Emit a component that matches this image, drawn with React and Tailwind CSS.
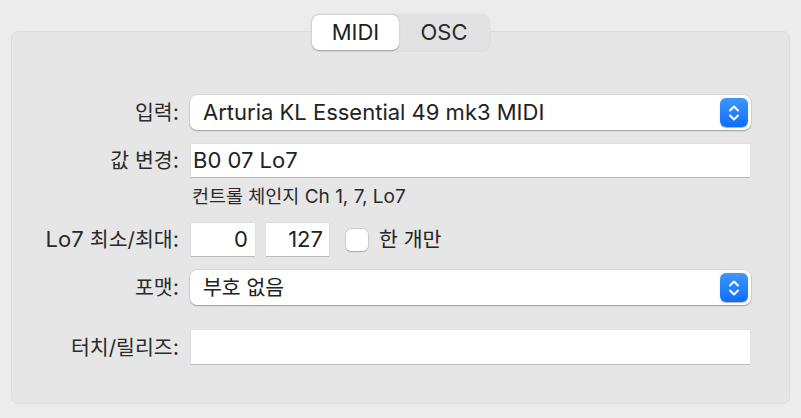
import React from 'react';

const font = { fontFamily: 'Inter, "Noto Sans CJK KR", sans-serif' };

// Hangul runs sized apart from the Latin text
const K = ({ children, className = 'text-[20.5px]' }) => <span className={className}>{children}</span>;

const Stepper = () => (
  <div className="w-[28px] h-[29px] rounded-[6px] bg-gradient-to-b from-[#3d97ff] to-[#0b6dfe] flex items-center justify-center shadow-[0_0.5px_1px_rgba(0,0,0,0.3)]">
    <svg width="14" height="20" viewBox="0 0 14 20" fill="none" stroke="white" strokeWidth="2" strokeLinecap="round" strokeLinejoin="round">
      <path d="M3 7.5 L7 3.5 L11 7.5" />
      <path d="M3 12.5 L7 16.5 L11 12.5" />
    </svg>
  </div>
);

const Popup = ({ children }) => (
  <div className="flex-1 h-[35px] bg-white rounded-[7px] flex items-center justify-between pl-[13px] pr-[3px] shadow-[0_0_0_0.5px_rgba(0,0,0,0.12),0_1px_1.5px_rgba(0,0,0,0.28)]">
    <span className="text-[22px] text-[#222] whitespace-nowrap">{children}</span>
    <Stepper />
  </div>
);

const Field = ({ children, className = '' }) => (
  <div className={`h-[33px] bg-white flex items-center text-[22px] text-[#222] whitespace-nowrap shadow-[0_0_0_0.5px_rgba(0,0,0,0.06),0_1px_0_rgba(0,0,0,0.16)] ${className}`}>
    {children}
  </div>
);

const Label = ({ children }) => (
  <div className="w-[158px] shrink-0 text-right text-[22px] text-[#2a2a2a] pr-[1px] whitespace-nowrap">{children}</div>
);

export default function App() {
  return (
    <div className="w-[801px] h-[418px] bg-[#ececec] pt-[14px] px-[11px]" style={font}>
      <div className="relative z-10 flex justify-center">
        <div className="flex h-[37px] rounded-[8px] bg-[#e2e2e2] shadow-[0_0_0_0.5px_rgba(0,0,0,0.06)] p-[1px]">
          <div className="w-[87px] rounded-[7px] bg-white flex items-center justify-center text-[22px] text-[#1f1f1f] shadow-[0_0.5px_1.5px_rgba(0,0,0,0.3)]">
            MIDI
          </div>
          <div className="w-[90px] flex items-center justify-center text-[22px] text-[#2a2a2a]">OSC</div>
        </div>
      </div>
      <div className="-mt-[20px] h-[373px] rounded-[7px] bg-[#e6e6e6] border border-[#dddddd] pt-[63px] pr-[38px] flex flex-col">
        <div className="flex items-center gap-[10px] pl-[10px]">
          <Label><K>입력</K>:</Label>
          <Popup>Arturia KL Essential 49 mk3 MIDI</Popup>
        </div>
        <div className="flex items-center gap-[10px] pl-[10px] mt-[14px] pr-[1px]">
          <Label><K>값 변경</K>:</Label>
          <Field className="flex-1 ml-[1px] pl-[2px]">B0 07 Lo7</Field>
        </div>
        <div className="pl-[180px] mt-[10px] h-[20px] flex items-center text-[19px] text-[#2a2a2a] whitespace-nowrap">
          <span><K className="text-[18.5px]">컨트롤 체인지</K> Ch 1, 7, Lo7</span>
        </div>
        <div className="flex items-center gap-[10px] pl-[10px] mt-[16px]">
          <Label>Lo7 <K>최소/최대</K>:</Label>
          <div className="flex items-center ml-[1px]">
            <Field className="w-[64px] justify-end pr-[7px]">0</Field>
            <Field className="w-[63px] ml-[11px] justify-end pr-[6px]">127</Field>
            <div className="ml-[17px] w-[22px] h-[22px] rounded-[5px] bg-white shadow-[0_0_0_0.5px_rgba(0,0,0,0.15),0_0.5px_1.5px_rgba(0,0,0,0.2)]" />
            <span className="ml-[11px] text-[22px] text-[#222] whitespace-nowrap"><K>한 개만</K></span>
          </div>
        </div>
        <div className="flex items-center gap-[10px] pl-[10px] mt-[14px]">
          <Label><K>포맷</K>:</Label>
          <Popup><K>부호 없음</K></Popup>
        </div>
        <div className="flex items-center gap-[10px] pl-[10px] mt-[25px] pr-[1px]">
          <Label><K>터치/릴리즈</K>:</Label>
          <Field className="flex-1 ml-[1px] h-[34px]" />
        </div>
      </div>
    </div>
  );
}
